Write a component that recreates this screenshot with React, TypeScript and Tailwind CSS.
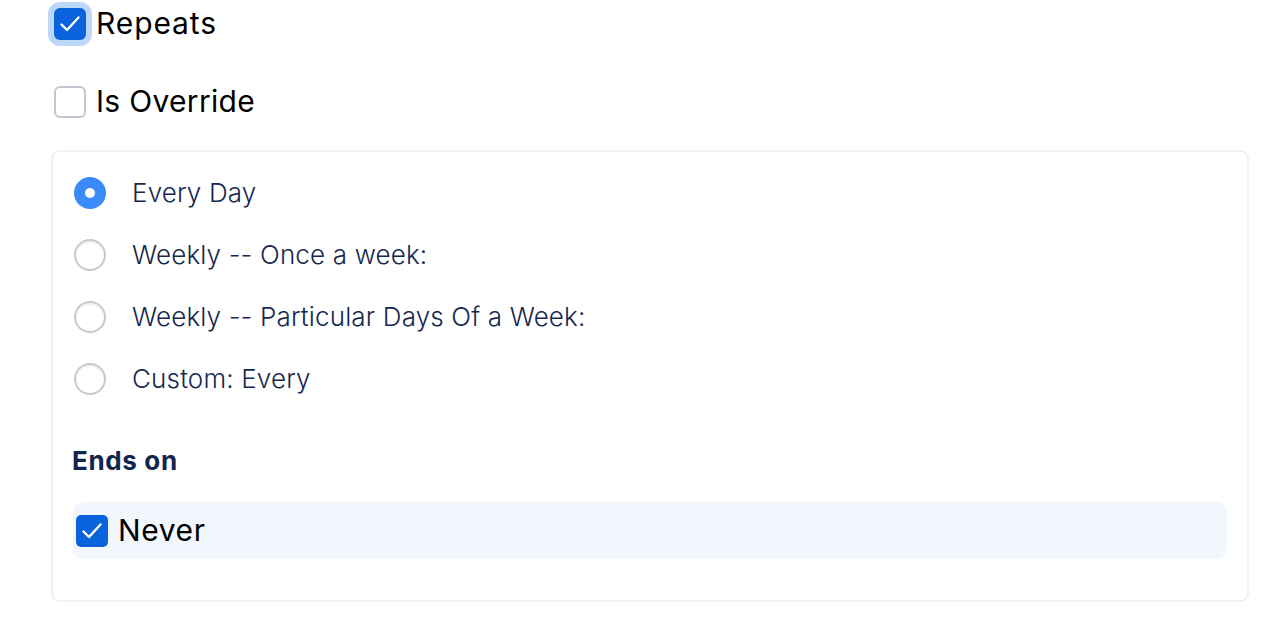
import React, { useState } from "react";

const options = [
  "Every Day",
  "Weekly -- Once a week:",
  "Weekly -- Particular Days Of a Week:",
  "Custom: Every",
];

const Check = () => (
  <svg viewBox="0 0 32 32" className="w-8 h-8 shrink-0" fill="none">
    <path
      d="M7.5 16.5l5.5 5.5 11.5-12.5"
      stroke="white"
      strokeWidth="2.4"
      strokeLinecap="round"
      strokeLinejoin="round"
    />
  </svg>
);

export default function App() {
  const [selected, setSelected] = useState(0);
  const [repeats, setRepeats] = useState(true);
  const [override, setOverride] = useState(false);
  const [never, setNever] = useState(true);

  return (
    <div
      className="w-[1288px] h-[636px] bg-white pl-[54px] pr-[39px]"
      style={{ fontFamily: "Inter, 'Noto Sans', sans-serif" }}
    >
      <div className="pt-2 flex items-center gap-[10px] h-8 box-content">
        <button
          onClick={() => setRepeats(!repeats)}
          className={`w-8 h-8 rounded-[6px] flex items-center justify-center ring-[6px] ring-[#bdd7fb] ${
            repeats ? "bg-[#0a62dc]" : "bg-white border-2 border-[#c3c7d1]"
          }`}
        >
          {repeats && <Check />}
        </button>
        <span className="text-[30px] tracking-[0.03em] text-black leading-none -mt-[2px]">
          Repeats
        </span>
      </div>

      <div className="mt-[46px] flex items-center gap-[10px] h-8">
        <button
          onClick={() => setOverride(!override)}
          className={`w-8 h-8 rounded-[6px] flex items-center justify-center ${
            override ? "bg-[#0a62dc]" : "bg-white border-2 border-[#c3c7d1]"
          }`}
        >
          {override && <Check />}
        </button>
        <span className="text-[30px] tracking-[0.01em] text-black leading-none -mt-[2px]">
          Is Override
        </span>
      </div>

      <div className="mt-[32px] -ml-[3px] border-2 border-[#f1f1f3] rounded-[8px] pl-[21px] pr-5 pt-[25px] pb-[41px]">
        <div className="flex flex-col gap-[30px]">
          {options.map((o, i) => (
            <label
              key={o}
              className="flex items-center gap-[26px] h-8 cursor-pointer"
              onClick={() => setSelected(i)}
            >
              {selected === i ? (
                <span className="w-8 h-8 rounded-full bg-[#3a8bf8] flex items-center justify-center">
                  <span className="w-[10px] h-[10px] rounded-full bg-white" />
                </span>
              ) : (
                <span className="w-8 h-8 rounded-full bg-white border-2 border-[#c9c9cc] shadow-[inset_0_2px_2px_rgba(0,0,0,0.06)]" />
              )}
              <span className="text-[26px] tracking-[0.006em] font-light text-[#15294f] leading-none">
                {o}
              </span>
            </label>
          ))}
        </div>

        <div className="mt-[53px] -ml-[2px] text-[26px] tracking-[0.025em] font-bold text-[#12264d] leading-none">
          Ends on
        </div>

        <div className="mt-[28px] -ml-[1px] h-[57px] bg-[#f2f6fd] rounded-[10px] flex items-center gap-[10px] pl-[3px]">
          <button
            onClick={() => setNever(!never)}
            className={`w-8 h-8 rounded-[5px] flex items-center justify-center ${
              never ? "bg-[#0a62dc]" : "bg-white border-2 border-[#c3c7d1]"
            }`}
          >
            {never && <Check />}
          </button>
          <span className="text-[30px] tracking-[0.02em] text-black leading-none -mt-[2px]">
            Never
          </span>
        </div>
      </div>
    </div>
  );
}
